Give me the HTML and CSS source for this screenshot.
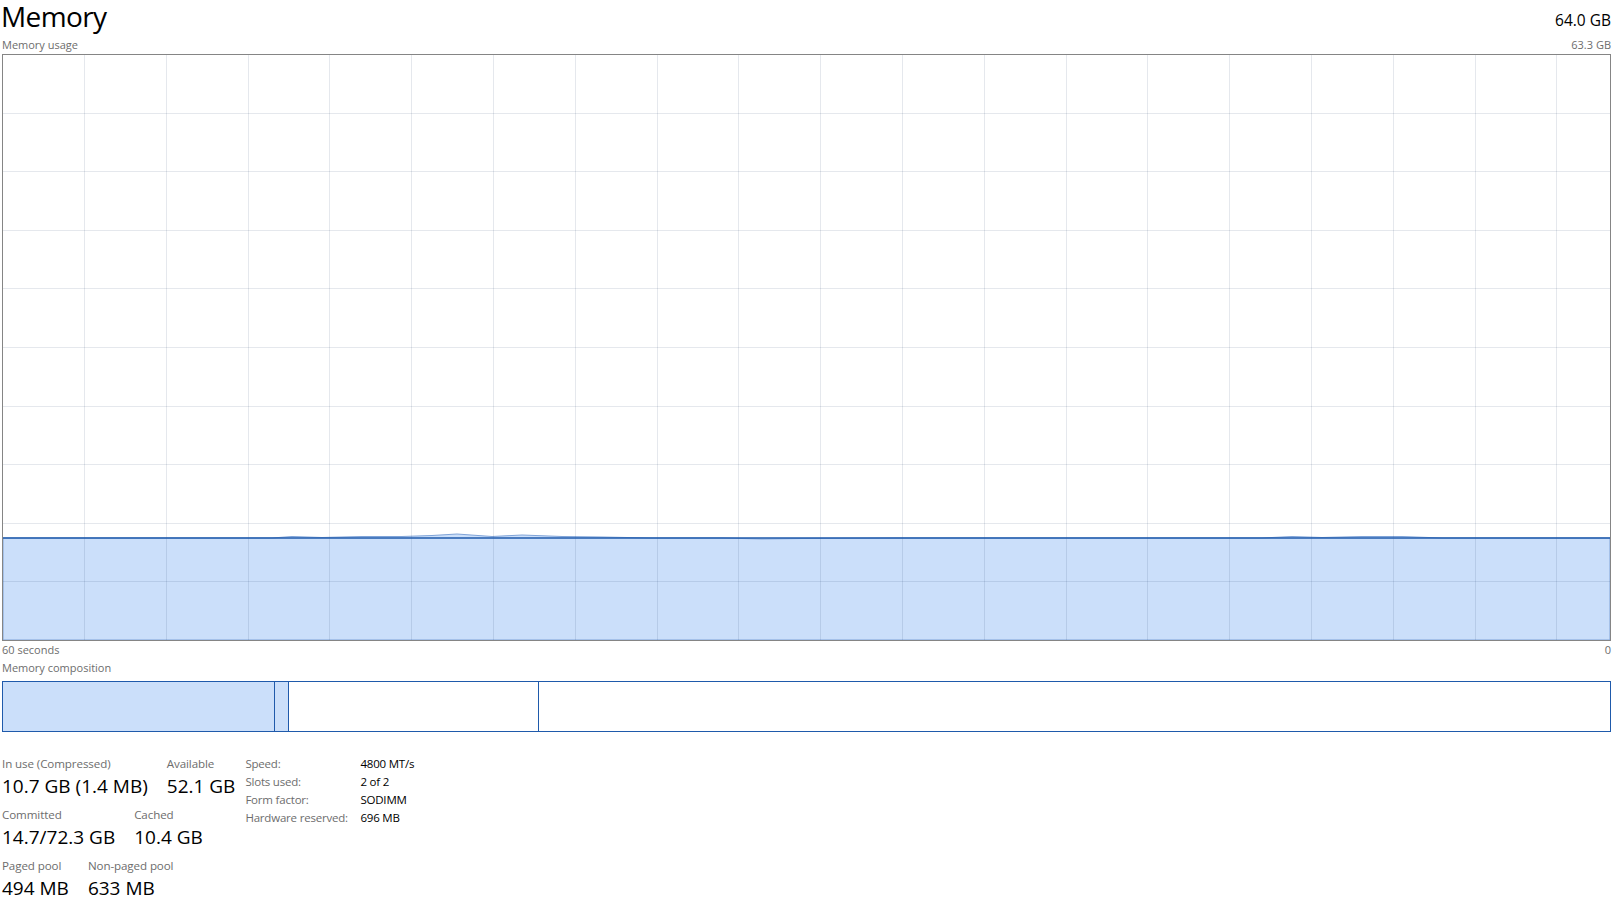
FILE: index.html
```html
<!DOCTYPE html>
<html lang="en">
<head>
  <meta charset="UTF-8">
  <title>Memory</title>
  <link rel="stylesheet" href="styles.css">
</head>
<body>
  <div class="page">
    <div class="head">
      <h1 class="title">Memory</h1>
      <div class="total">64.0 GB</div>
    </div>
    <div class="caption">
      <span>Memory usage</span>
      <span>63.3 GB</span>
    </div>

    <svg class="chart" width="1609" height="587" viewBox="0 0 1609 587">
      <rect x="0" y="0" width="1609" height="587" fill="#fff"/>
      <path class="area" d="M1 484 L60 484 L200 484 L270 484 L290 482.5 L320 483.5 L360 482.5 L400 482.5 L430 481.5 L455 480 L490 482.5 L520 481 L560 482.5 L600 483 L650 484 L720 484 L760 485 L800 484.5 L900 484 L1260 484 L1290 482.5 L1320 483.5 L1360 482.5 L1400 482.5 L1440 484 L1500 484 L1608 484 L1608 586 L1 586 Z"/>
      <g class="grid" id="grid"></g>
      <line class="usage" x1="1" y1="484" x2="1608" y2="484"/>
      <rect class="frame" x="0.5" y="0.5" width="1608" height="586"/>
    </svg>

    <div class="axis">
      <span>60 seconds</span>
      <span>0</span>
    </div>

    <div class="caption comp-caption">Memory composition</div>
    <div class="composition">
      <div class="seg inuse"></div>
      <div class="seg modified"></div>
      <div class="seg standby"></div>
      <div class="seg free"></div>
    </div>

    <div class="stats">
      <div class="left">
        <div class="row">
          <div class="stat"><div class="label">In use (Compressed)</div><div class="value">10.7 GB (1.4 MB)</div></div>
          <div class="stat"><div class="label">Available</div><div class="value">52.1 GB</div></div>
        </div>
        <div class="row">
          <div class="stat"><div class="label">Committed</div><div class="value">14.7/72.3 GB</div></div>
          <div class="stat"><div class="label">Cached</div><div class="value">10.4 GB</div></div>
        </div>
        <div class="row">
          <div class="stat"><div class="label">Paged pool</div><div class="value">494 MB</div></div>
          <div class="stat"><div class="label">Non-paged pool</div><div class="value">633 MB</div></div>
        </div>
      </div>
      <table class="specs">
        <tr><td>Speed:</td><td>4800 MT/s</td></tr>
        <tr><td>Slots used:</td><td>2 of 2</td></tr>
        <tr><td>Form factor:</td><td>SODIMM</td></tr>
        <tr><td>Hardware reserved:</td><td>696 MB</td></tr>
      </table>
    </div>
  </div>
  <script>
    // grid lines, scrolled like the live graph
    const grid = document.getElementById('grid');
    const ns = 'http://www.w3.org/2000/svg';
    for (let i = 0; i < 19; i++) {
      const x = Math.round(82 + i * 81.8) + 0.5;
      const l = document.createElementNS(ns, 'line');
      l.setAttribute('x1', x); l.setAttribute('x2', x);
      l.setAttribute('y1', 1); l.setAttribute('y2', 586);
      grid.appendChild(l);
    }
    for (let j = 1; j < 10; j++) {
      const y = Math.round(j * 58.6) + 0.5;
      const l = document.createElementNS(ns, 'line');
      l.setAttribute('x1', 1); l.setAttribute('x2', 1608);
      l.setAttribute('y1', y); l.setAttribute('y2', y);
      grid.appendChild(l);
    }
  </script>
</body>
</html>
```

FILE: styles.css
```css
* { box-sizing: border-box; }
body { margin: 0; background: #fff; color: #000; font-family: "Open Sans", "Noto Sans", sans-serif; }
.page { width: 1611px; padding: 0 0 0 2px; }

.head { display: flex; justify-content: space-between; align-items: flex-start; height: 38px; }
.title { margin: 0 0 0 -1px; font-size: 28px; font-weight: 400; line-height: 32px; letter-spacing: -0.6px; }
.total { font-size: 15.5px; line-height: 20px; margin-top: 10px; }

.caption { display: flex; justify-content: space-between; font-size: 11px; line-height: 14px; color: #6d6d6d; height: 16px; }
.chart { display: block; }
.chart .area { fill: #cbdffa; stroke: #7fa3d8; stroke-width: 1; }
.chart .grid line { stroke: rgba(0, 30, 80, 0.1); stroke-width: 1; }
.chart .usage { stroke: #1f5aab; stroke-width: 1.5; }
.chart .frame { fill: none; stroke: #858585; stroke-width: 1; }

.axis { display: flex; justify-content: space-between; font-size: 11px; line-height: 14px; color: #6d6d6d; height: 20px; padding-top: 2px; }
.comp-caption { height: 20px; }

.composition { display: flex; width: 1609px; height: 51px; border: 1px solid #1f5aab; }
.seg { height: 100%; }
.inuse { width: 272px; background: #cbdffa; border-right: 1px solid #1f5aab; }
.modified { width: 14px; background: #cbdffa; border-right: 1px solid #1f5aab; }
.standby { width: 250px; border-right: 1px solid #1f5aab; }
.free { flex: 1; }

.stats { display: flex; gap: 10px; padding-top: 25px; }
.left { display: flex; flex-direction: column; }
.row { display: flex; gap: 19px; height: 51px; }
.label { font-size: 11.6px; line-height: 14px; color: #6d6d6d; letter-spacing: -0.1px; }
.value { font-size: 19px; line-height: 26px; margin-top: 2px; }

.specs { border-collapse: collapse; font-size: 11.5px; letter-spacing: -0.2px; align-self: flex-start; }
.specs td { padding: 0; height: 18px; line-height: 14px; vertical-align: top; }
.specs td:first-child { color: #6d6d6d; width: 115px; }
```
